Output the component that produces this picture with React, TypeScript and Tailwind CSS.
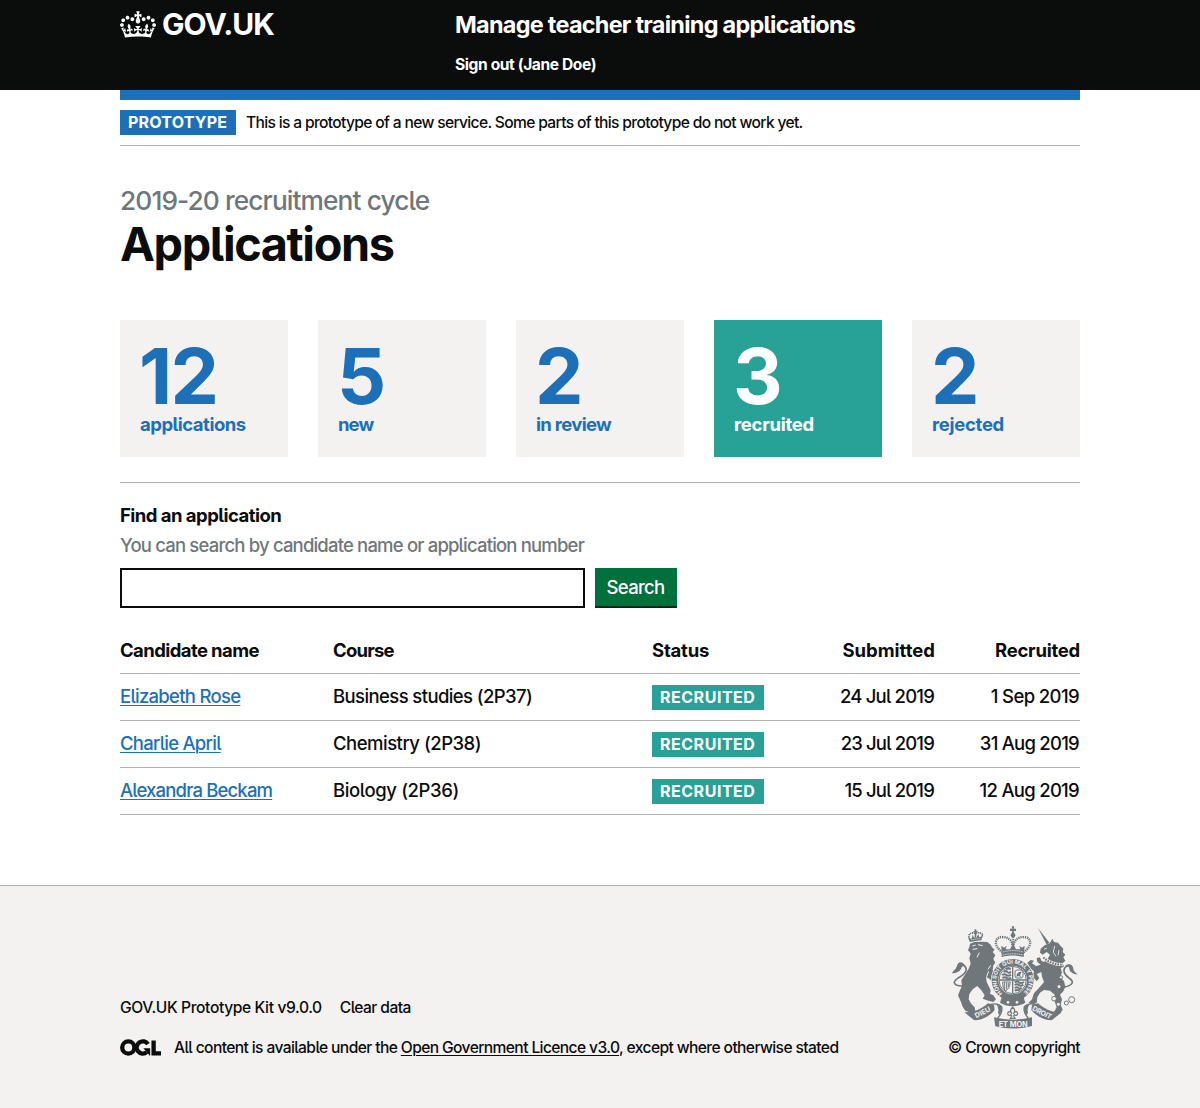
import type { ReactNode } from "react";

function CrownIcon() {
  return (
    <svg viewBox="0 0 132 97" className="h-[27px] w-9 shrink-0" fill="currentColor" aria-hidden="true">
      <path
        fillRule="evenodd"
        d="M25 30.2c3.5 1.5 7.7-.2 9.1-3.7 1.5-3.6-.2-7.8-3.9-9.2-3.6-1.4-7.6.3-9.1 3.9-1.4 3.5.3 7.5 3.9 9zM9 39.5c3.6 1.5 7.8-.2 9.2-3.7 1.5-3.6-.2-7.8-3.9-9.1-3.6-1.5-7.6.2-9.1 3.8-1.4 3.5.3 7.5 3.8 9zM4.4 57.2c3.5 1.5 7.7-.2 9.1-3.8 1.5-3.6-.2-7.7-3.9-9.1-3.5-1.5-7.6.3-9.1 3.8-1.4 3.5.3 7.6 3.9 9.1zm38.3-21.4c3.5 1.5 7.7-.2 9.1-3.8 1.5-3.6-.2-7.7-3.9-9.1-3.6-1.5-7.6.3-9.1 3.8-1.3 3.6.4 7.7 3.9 9.1zm64.4-5.6c-3.6 1.5-7.8-.2-9.1-3.7-1.5-3.6.2-7.8 3.8-9.2 3.6-1.4 7.7.3 9.2 3.9 1.3 3.5-.4 7.5-3.9 9zm15.9 9.3c-3.6 1.5-7.7-.2-9.1-3.7-1.5-3.6.2-7.8 3.7-9.1 3.6-1.5 7.7.2 9.2 3.8 1.5 3.5-.3 7.5-3.8 9zm4.7 17.7c-3.6 1.5-7.8-.2-9.2-3.8-1.5-3.6.2-7.7 3.9-9.1 3.6-1.5 7.7.3 9.2 3.8 1.3 3.5-.4 7.6-3.9 9.1zM89.3 35.8c-3.6 1.5-7.8-.2-9.2-3.8-1.4-3.6.2-7.7 3.9-9.1 3.6-1.5 7.7.3 9.2 3.8 1.4 3.6-.3 7.7-3.9 9.1zM69.7 17.7l8.9 4.7V9.3l-8.9 2.8c-.2-.3-.5-.6-.9-.9L72.4 0H59.6l3.5 11.2c-.3.3-.6.5-.9.9l-8.8-2.8v13.1l8.8-4.7c.3.3.6.7.9.9l-5 15.4v.1c-.2.8-.4 1.6-.4 2.4 0 4.1 3.1 7.5 7 8.1h.2c.3 0 .7.1 1 .1.4 0 .7 0 1-.1h.2c4-.6 7.1-4.1 7.1-8.1 0-.8-.1-1.7-.4-2.4V34l-5.1-15.4c.4-.2.7-.6 1-.9zM66 92.8c16.9 0 32.8 1.1 47.1 3.2 4-16.9 8.9-26.7 14-33.5l-9.6-3.4c1 4.9 1.1 7.2 0 10.2-1.5-1.4-3-4.3-4.2-8.7L108.6 76c2.8-2 5-3.2 7.5-3.3-4.4 9.4-10 11.9-13.6 11.2-4.3-.8-6.3-4.6-5.6-7.9 1-4.7 5.7-5.9 8-.5 4.3-8.7-3-11.4-7.6-8.8 7.1-7.2 7.9-13.5 2.1-21.1-8 6.1-8.1 12.3-4.5 20.8-4.7-5.4-12.1-2.5-9.5 6.2 3.4-5.2 7.9-2 7.2 3.1-.6 4.3-6.4 7.8-13.5 7.2-10.3-.9-10.9-8-11.2-13.8 2.5-.5 7.1 1.8 11 7.3L80.2 60c-4.1 4.4-8 5.3-12.3 5.4 1.4-4.4 8-11.6 8-11.6H55.5s6.4 7.2 7.9 11.6c-4.2-.1-8-1-12.3-5.4l1.4 16.4c3.9-5.5 8.5-7.7 10.9-7.3-.3 5.8-.9 12.8-11.1 13.8-7.2.6-12.9-2.9-13.5-7.2-.7-5 3.8-8.3 7.1-3.1 2.7-8.7-4.6-11.6-9.4-6.2 3.7-8.5 3.6-14.7-4.6-20.8-5.8 7.6-5 13.9 2.2 21.1-4.7-2.6-11.9.1-7.7 8.8 2.3-5.5 7.1-4.2 8.1.5.7 3.3-1.3 7.1-5.7 7.9-3.5.7-9-1.8-13.5-11.2 2.5.1 4.7 1.3 7.5 3.3l-4.7-15.4c-1.2 4.4-2.7 7.2-4.3 8.7-1.1-3-.9-5.3 0-10.2l-9.5 3.4c5 6.9 9.9 16.7 14 33.5 14.8-2.1 30.8-3.2 47.7-3.2z"
      />
    </svg>
  );
}

/* Open Government Licence mark: a ring, an open ring with a spur, and an angle. */
function OglMark() {
  return (
    <svg viewBox="0 0 483 196" className="h-[17px] w-[41px] shrink-0" fill="none" stroke="currentColor" strokeWidth="51" role="img" aria-label="OGL">
      <circle cx="98" cy="98" r="72" />
      <path d="M329 59A72 72 0 1 0 315 152" />
      <path d="M275 106h80v88h-3z" fill="currentColor" stroke="none" />
      <path d="M396 16v152h87" />
    </svg>
  );
}

/* Royal coat of arms: lion, crowned shield, unicorn and motto ribbon. */
function RoyalArms() {
  const ink = "#6f777b";
  const paper = "#f3f2f1";
  return (
    <svg viewBox="36 32 378 309" className="h-[103px] w-[126px]" fill={ink} stroke="none" aria-hidden="true">
      {/* lion */}
      <path d="M90 78L86 62" stroke={ink} strokeWidth="4" />
      <path d="M121 75l7-17" stroke={ink} strokeWidth="4" />
      <path d="M86 60q7-10 20-6 14-5 22 4" fill="none" stroke={ink} strokeWidth="5" strokeDasharray="4 2" />
      <path d="M88 70l35-6 1 10-33 6zM96 70l1-12 6 10zM118 66l-3-10-5 10z" />
      <path d="M104 42h5v5h4v4h-4v16h-5V51h-4v-4h4z" />
      <path d="M92 74l30-5" stroke={paper} strokeWidth="2" strokeDasharray="4 2" />
      <path d="M90 85L104 80 126 79 142 80 152 88 156 96 164 103 158 110 166 120 160 130 166 142 160 150 158 165 168 178 178 195 184 208 176 214 160 205 150 192 138 184 140 200 146 212 152 225 150 235 160 240 168 252 160 260 145 256 128 250 134 240 124 225 112 212 98 222 88 236 86 252 94 266 104 276 106 288 92 292 76 286 68 274 62 258 54 240 60 225 66 212 64 195 76 176 86 160 92 145 88 128 92 115 84 104 88 96z" />
      <path d="M97 92l10-3M114 88l14 3M98 102l14-2M118 112l-7 14M146 168l-6 16M152 150l-8 12" stroke={paper} strokeWidth="3" fill="none" />
      <path d="M66 212C43 212 35 201 53 189 75 176 86 165 73 151 61 143 52 158 58 166" fill="none" stroke={ink} strokeWidth="5" />
      <path d="M74 148c-10-11-20-10-24 6-4 10-9 9-14 20 14 0 25-6 29-18z" />
      {/* unicorn */}
      <path d="M294 38l34 44-8 6z" />
      <path d="M329 84L337 70 342 80 354 82 362 92 370 100 368 110 376 118 370 126 376 136 368 144 372 154 362 158 366 172 360 184 372 198 376 214 370 228 360 238 366 252 362 268 368 284 358 296 342 290 350 276 344 258 344 238 330 226 312 224 300 232 292 246 290 262 276 268 266 262 276 252 282 234 300 214 312 200 306 184 304 170 290 176 298 188 290 198 278 184 282 168 272 160 262 142 272 134 282 136 276 144 288 152 302 148 292 140 290 128 300 126 304 136 312 140 322 132 330 118 320 110 308 118 300 112 302 100 314 90z" />
      <path d="M310 126q22 22 58 22" stroke={paper} strokeWidth="10" fill="none" />
      <path d="M310 126q22 22 58 22" stroke={ink} strokeWidth="6" strokeDasharray="5 3" fill="none" />
      <path d="M312 102l9-4M344 92l-4 19 8 12M357 104l-3 16" stroke={paper} strokeWidth="2.5" fill="none" />
      <path d="M373 215c26-5 31-16 14-27-18-13-19-27-8-35 13-6 19 5 12 15" fill="none" stroke={ink} strokeWidth="5" />
      <path d="M376 151c13-10 24-2 24 11 2 8 7 9 13 16-15-1-24-8-26-22z" />
      <g fill={paper} stroke={ink} strokeWidth="3">
        <circle cx="363" cy="186" r="5" />
        <circle cx="357" cy="214" r="6" />
        <circle cx="342" cy="250" r="7" />
        <circle cx="355" cy="267" r="6" />
        <circle cx="379" cy="263" r="6" />
        <circle cx="395" cy="253" r="9" />
      </g>
      {/* crown over the shield */}
      <path d="M215 33h8l-2 7h7v7h-7l2 8h-8l2-8h-7v-7h7z" />
      <circle cx="219" cy="60" r="7" />
      <g fill="none" stroke={ink}>
        <path d="M188 111C157 91 165 64 187 65c19 0 29 11 30 24M250 111c31-20 23-47 1-46-19 0-29 11-30 24" strokeWidth="7" strokeDasharray="4 2.5" />
        <path d="M219 65v39" strokeWidth="5" strokeDasharray="4 2" />
      </g>
      <path d="M184 91l8 6 8-6-3 11h13l6-12h6l6 12h13l-3-11 8 6 8-6-3 34c-25-6-41-6-66 0z" />
      <path d="M188 110c26-6 36-6 62 0M188 119c26-5 36-5 62 0" fill="none" stroke={paper} strokeWidth="2" strokeDasharray="5 2" />
      {/* garter and quartered shield */}
      <circle cx="218" cy="194" r="65" fill={paper} />
      <circle cx="218" cy="194" r="53" fill="none" stroke={ink} strokeWidth="20" />
      <path id="garter" d="M188 233A49 49 0 1 1 248 233" fill="none" />
      <text fill={paper} fontFamily="Inter, sans-serif" fontSize="17" fontWeight="700">
        <textPath href="#garter" textLength="240">HONI SOIT QUI MAL Y PENSE</textPath>
      </text>
      <path d="M186 243c21 9 43 9 64 0l6 19c-24 14-52 14-76 0z" />
      <circle cx="204" cy="261" r="4" fill={paper} />
      <circle cx="231" cy="261" r="4" fill={paper} />
      <circle cx="218" cy="194" r="41" fill={paper} stroke={ink} strokeWidth="3" />
      <path d="M218 154v80M178 194h80" stroke={ink} strokeWidth="4" />
      <g fill="none" stroke={ink} strokeWidth="6">
        <path d="M191 170q7-5 11 0t11-1M186 179q8-5 13 0t14-1M187 188q8-5 13 0t13-1M198 162q7-5 14 0" />
        <path d="M224 218q8-5 12 0t9-1M224 209q8-5 13 0t13-1M224 201q8-5 13 0t15-1M224 226q7-4 15 0" />
      </g>
      <rect x="225" y="164" width="24" height="24" rx="6" fill="none" stroke={ink} strokeWidth="3" />
      <path d="M229 184q1-16 16-15l-5 11 5 6-9-4z" />
      <path d="M188 200h23q-2 21-15 27-9-10-8-27zm6 1v22m6-21v20m5-19v12" fill="none" stroke={ink} strokeWidth="3" />
      {/* ribbon */}
      <path d="M152 267q22-5 33 7 4 18-12 34M286 267q-22-5-33 7-4 18 12 34" fill={paper} stroke={ink} strokeWidth="4" />
      <path d="M170 268l14 4 2 12-8 16-4-8q4-12-4-24M268 268l-14 4-2 12 8 16 4-8q-4-12 4-24" />
      <path d="M73 291C100 292 124 282 144 264L162 268 164 284C150 302 125 315 103 315z" />
      <path d="M365 291C338 292 314 282 294 264L276 268 274 284C288 302 313 315 335 315z" />
      <path d="M162 306q57 14 114 0v26q-57 15-110 1z" />
      <g fill={paper} fontFamily="Inter, sans-serif" fontWeight="700">
        <text x="109" y="309" fontSize="21" textLength="50" transform="rotate(-27 109 309)">DIEU</text>
        <text x="176" y="334" fontSize="22" textLength="87">ET MON</text>
        <text x="275" y="284" fontSize="21" textLength="62" transform="rotate(27 275 284)">DROIT</text>
      </g>
      <path d="M218 275c8 8 7 15 2 20 6-9 13-7 13 0-1 6-7 7-10 3l-2 4 4 7h-14l4-7-2-4c-3 4-9 3-10-3 0-7 7-9 13 0-5-5-6-12 2-20z" fill={paper} stroke={ink} strokeWidth="3.5" />
    </svg>
  );
}

function Tag({ className, children }: { className: string; children: ReactNode }) {
  return (
    <strong className={`inline-block h-[25px] pl-2 text-[16px] leading-[25px] font-bold text-white ${className}`}>
      {children}
    </strong>
  );
}

const stats = [
  { count: "12", label: "applications", spacing: "tracking-[-0.5px]" },
  { count: "5", label: "new", spacing: "tracking-[-0.9px]" },
  { count: "2", label: "in review", spacing: "tracking-[-0.68px]" },
  { count: "3", label: "recruited", spacing: "tracking-[-0.27px]", active: true },
  { count: "2", label: "rejected", spacing: "tracking-[-0.29px]" },
];

const rows = [
  {
    name: ["Elizabeth Rose", "tracking-[-0.72px]"],
    course: ["Business studies (2P37)", "tracking-[-0.6px]"],
    submitted: ["24 Jul 2019", "tracking-[-0.8px]"],
    recruited: ["1 Sep 2019", "tracking-[-0.62px]"],
  },
  {
    name: ["Charlie April", "tracking-[-0.74px]"],
    course: ["Chemistry (2P38)", "tracking-[-0.5px]"],
    submitted: ["23 Jul 2019", "tracking-[-0.84px]"],
    recruited: ["31 Aug 2019", "tracking-[-0.76px]"],
  },
  {
    name: ["Alexandra Beckam", "tracking-[-0.83px]"],
    course: ["Biology (2P36)", "tracking-[-0.38px]"],
    submitted: ["15 Jul 2019", "tracking-[-0.84px]"],
    recruited: ["12 Aug 2019", "tracking-[-0.72px]"],
  },
];

export default function App() {
  return (
    <div className="flex min-h-screen flex-col bg-white font-['Inter',sans-serif] font-[450] whitespace-nowrap text-[#0b0c0c] [font-feature-settings:'cv05']">
      <header className="h-[90px] bg-[#0b0c0c] text-white">
        <div className="mx-auto flex w-[960px]">
          <a href="#" className="flex h-[50px] w-[335px] items-center gap-1.5 pb-0.5">
            <CrownIcon />
            <span className="text-[30px] leading-[30px] font-bold tracking-[-0.92px]">GOV.UK</span>
          </a>
          <div className="pt-[10px]">
            <a href="#" className="block text-[23.4px] leading-[30px] font-bold tracking-[-0.71px]">Manage teacher training applications</a>
            <a href="#" className="mt-[15px] block text-[15.6px] leading-5 font-bold tracking-[-0.41px]">Sign out (Jane Doe)</a>
          </div>
        </div>
      </header>

      <div className="mx-auto w-[960px]">
        <div className="h-[10px] bg-[#1d70b8]" />
        <div className="flex h-[46px] items-center border-b border-[#b1b4b6]">
          <Tag className="w-[116px] bg-[#1d70b8] tracking-[0.22px]">PROTOTYPE</Tag>
          <span className="ml-[10px] pt-px text-[15.6px] leading-5 tracking-[-0.66px]">
            This is a prototype of a new service. Some parts of this prototype do not work yet.
          </span>
        </div>

        <main className="pt-10">
          <span className="block text-[26.3px] leading-[30px] tracking-[-0.9px] text-[#6f777b]">2019-20 recruitment cycle</span>
          <h1 className="mt-[3px] mb-[51px] text-[46.8px] leading-[50px] font-bold tracking-[-1.38px]">Applications</h1>

          <div className="grid grid-cols-5 gap-[30px]">
            {stats.map((s) => (
              <a
                key={s.label}
                href="#"
                className={`block h-[137px] pl-5 ${s.active ? "bg-[#28a197] text-white" : "bg-[#f3f2f1] text-[#1d70b8]"}`}
              >
                <span className="-ml-px block pt-5 text-[77px] leading-[72px] font-bold tracking-[-1.8px]">{s.count}</span>
                <span className={`block text-[18.5px] leading-[25px] font-bold ${s.spacing}`}>{s.label}</span>
              </a>
            ))}
          </div>

          <hr className="mt-[25px] border-t border-[#b1b4b6]" />

          <form className="mt-5" onSubmit={(e) => e.preventDefault()}>
            <label htmlFor="search" className="block text-[18.5px] leading-[25px] font-bold tracking-[-0.53px]">Find an application</label>
            <span className="mt-[5px] block text-[18.5px] leading-[25px] tracking-[-0.82px] text-[#6f777b]">
              You can search by candidate name or application number
            </span>
            <div className="mt-[10px] flex gap-[10px]">
              <input id="search" type="text" className="h-10 w-[465px] border-2 border-[#0b0c0c] px-1 text-[19px] outline-none" />
              <button className="h-10 w-[82px] border-b-2 border-[#002d18] bg-[#00703c] pr-px text-[18.5px] leading-[38px] tracking-[-0.72px] text-white">Search</button>
            </div>
          </form>

          <table className="mt-5 w-[960px] table-fixed border-collapse text-[18.5px] leading-[25px]">
            <colgroup>
              <col className="w-[213px]" />
              <col className="w-[319px]" />
              <col className="w-[178px]" />
              <col className="w-[125px]" />
              <col className="w-[125px]" />
            </colgroup>
            <thead>
              <tr className="h-[45px] border-b border-[#b1b4b6] text-left">
                <th className="font-bold tracking-[-0.59px]">Candidate name</th>
                <th className="font-bold tracking-[-0.8px]">Course</th>
                <th className="font-bold tracking-[-0.2px]">Status</th>
                <th className="pr-5 text-right font-bold">Submitted</th>
                <th className="text-right font-bold tracking-[-0.24px]">Recruited</th>
              </tr>
            </thead>
            <tbody>
              {rows.map((r) => (
                <tr key={r.name[0]} className="h-[47px] border-b border-[#b1b4b6]">
                  <td className={r.name[1]}>
                    <a href="#" className="text-[#1d70b8] underline decoration-1 underline-offset-2">{r.name[0]}</a>
                  </td>
                  <td className={r.course[1]}>{r.course[0]}</td>
                  <td className="pt-px align-middle leading-none">
                    <Tag className="w-28 bg-[#28a197] tracking-[0.52px]">RECRUITED</Tag>
                  </td>
                  <td className={`pr-[21px] text-right ${r.submitted[1]}`}>{r.submitted[0]}</td>
                  <td className={`pr-px text-right ${r.recruited[1]}`}>{r.recruited[0]}</td>
                </tr>
              ))}
            </tbody>
          </table>
        </main>
      </div>

      <footer className="mt-[70px] grow border-t border-[#b1b4b6] bg-[#f3f2f1] text-[15.6px] leading-5">
        <div className="mx-auto flex w-[960px] items-end justify-between pt-10">
          <div>
            <div className="flex gap-[18px]">
              <a href="#" className="tracking-[-0.38px]">GOV.UK Prototype Kit v9.0.0</a>
              <a href="#" className="tracking-[-0.58px]">Clear data</a>
            </div>
            <div className="mt-5 flex items-center">
              <OglMark />
              <span className="ml-[13px] tracking-[-0.61px]">
                All content is available under the{" "}
                <a href="#" className="underline decoration-1 underline-offset-2">Open Government Licence v3.0</a>, except where otherwise stated
              </span>
            </div>
          </div>
          <div className="flex flex-col items-end">
            <div className="mr-[2px]">
              <RoyalArms />
            </div>
            <a href="#" className="mt-[9px] block tracking-[-0.62px]">© Crown copyright</a>
          </div>
        </div>
      </footer>
    </div>
  );
}
